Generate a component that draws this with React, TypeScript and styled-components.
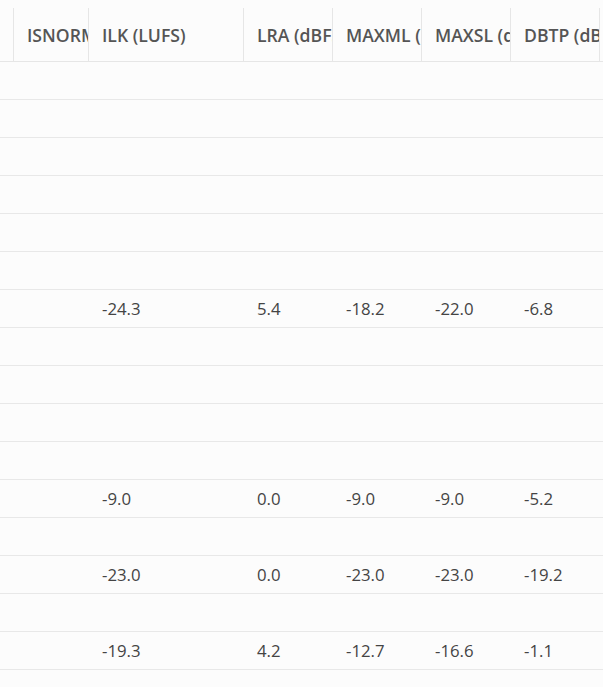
import React from "react";
import styled, { createGlobalStyle } from "styled-components";

const Global = createGlobalStyle`
  html, body { margin: 0; padding: 0; background: #fcfcfc; }
  body { font-family: "Open Sans", "Noto Sans", sans-serif; overflow: hidden; }
`;

const COLS = "13px 75px 155px 89px 89px 89px 89px 89px";

const Page = styled.div`
  width: 603px;
  height: 687px;
  overflow: hidden;
  padding-top: 8px;
  box-sizing: border-box;
`;

const HeaderRow = styled.div`
  display: grid;
  grid-template-columns: ${COLS};
  height: 54px;
  border-bottom: 1px solid #e6e6e6;
  box-sizing: border-box;
`;

const HeadCell = styled.div<{ $first?: boolean }>`
  border-left: ${(p) => (p.$first ? "none" : "1px solid #e6e6e6")};
  padding-left: 13px;
  display: flex;
  align-items: center;
  white-space: nowrap;
  overflow: hidden;
  font-size: 17.6px;
  font-weight: 600;
  color: #555;
`;

const Row = styled.div`
  display: grid;
  grid-template-columns: ${COLS};
  height: 38px;
  border-bottom: 1px solid #e8e8e8;
  box-sizing: border-box;
`;

const Cell = styled.div<{ $first?: boolean }>`
  padding-left: ${(p) => (p.$first ? "0" : "14px")};
  display: flex;
  align-items: center;
  white-space: nowrap;
  overflow: hidden;
  font-size: 16.8px;
  color: #444;
`;

const headers = ["", "ISNORM", "ILK (LUFS)", "LRA (dBFS)", "MAXML (dBFS)", "MAXSL (dBFS)", "DBTP (dBFS)", ""];

const data: Record<number, string[]> = {
  6: ["-24.3", "5.4", "-18.2", "-22.0", "-6.8"],
  11: ["-9.0", "0.0", "-9.0", "-9.0", "-5.2"],
  13: ["-23.0", "0.0", "-23.0", "-23.0", "-19.2"],
  15: ["-19.3", "4.2", "-12.7", "-16.6", "-1.1"],
};

export default function App() {
  const rows = Array.from({ length: 17 }, (_, i) => i);
  return (
    <Page>
      <Global />
      <HeaderRow>
        {headers.map((h, i) => (
          <HeadCell key={i} $first={i === 0}>
            {h}
          </HeadCell>
        ))}
      </HeaderRow>
      {rows.map((r) => {
        const vals = data[r];
        return (
          <Row key={r}>
            <Cell $first />
            <Cell />
            {[0, 1, 2, 3, 4].map((c) => (
              <Cell key={c}>{vals ? vals[c] : ""}</Cell>
            ))}
            <Cell />
          </Row>
        );
      })}
    </Page>
  );
}
